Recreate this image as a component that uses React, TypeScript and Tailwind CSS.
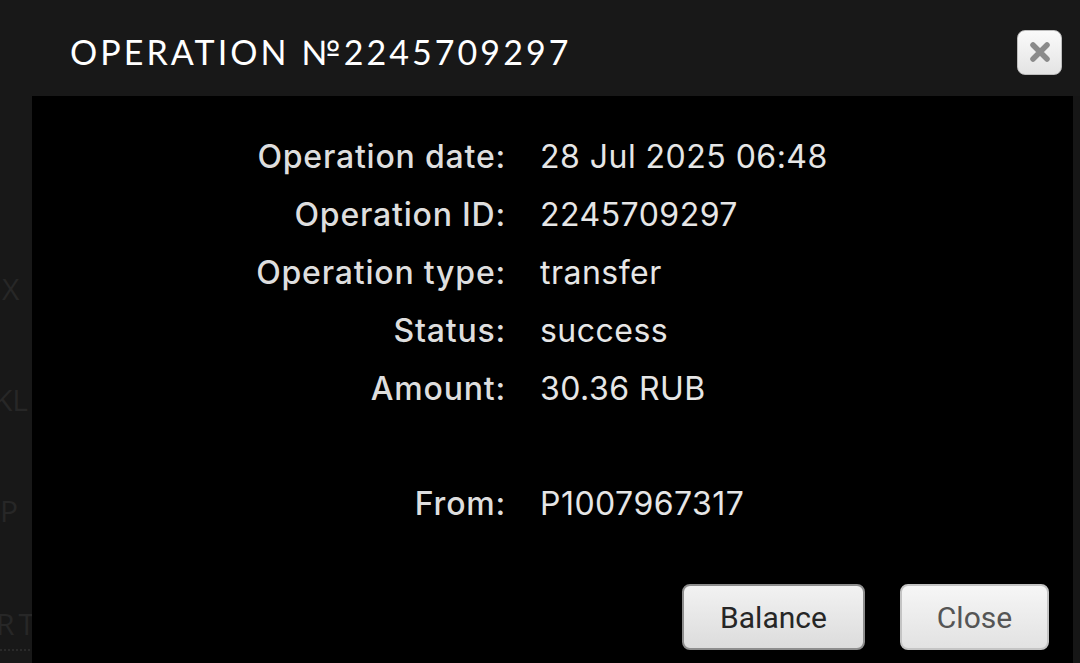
const rows: [string, string][] = [
  ['Operation date:', '28 Jul 2025 06:48'],
  ['Operation ID:', '2245709297'],
  ['Operation type:', 'transfer'],
  ['Status:', 'success'],
  ['Amount:', '30.36 RUB'],
];

function Row({ label, value }: { label: string; value: string }) {
  return (
    <div className="flex h-[58px] items-center">
      <div className="w-[474px] text-right font-medium text-[#dedede] tracking-[0.025em]">{label}</div>
      <div className="pl-[34px] text-[#e6e6e6] tracking-[0.015em]">{value}</div>
    </div>
  );
}

export default function App() {
  return (
    <div className="w-[1080px] h-[663px] bg-[#181818] flex flex-col overflow-hidden font-['Inter',sans-serif]">
      <div className="h-[96px] flex items-center justify-between pl-[70px] pr-[18px] shrink-0">
        <h1 className="text-[34px] tracking-[0.09em] text-white font-['Lato',sans-serif] leading-none pt-[8px]">
          OPERATION №2245709297
        </h1>
        <button className="w-[45px] h-[45px] rounded-[8px] border border-[#bdbdbd] bg-gradient-to-b from-[#fafafa] to-[#e4e4e4] flex items-center justify-center mt-[8px]">
          <svg width="22" height="22" viewBox="0 0 22 22">
            <path d="M4 4 L18 18 M18 4 L4 18" stroke="#8a8a8a" strokeWidth="5.5" strokeLinecap="round" />
          </svg>
        </button>
      </div>

      <div className="flex flex-1 min-h-0">
        <div className="w-[32px] shrink-0 relative overflow-hidden text-[#272727] text-[30px] font-['Open_Sans',sans-serif]">
          <div className="absolute top-[170px] left-[2px]">X</div>
          <div className="absolute top-[281px] -left-[6px]">KL</div>
          <div className="absolute top-[392px] left-[0px]">P</div>
          <div className="absolute top-[505px] -left-[4px] tracking-[4px]">RT</div>
          <div className="absolute top-[553px] left-0 w-[30px] border-t-2 border-dotted border-[#2a2a2a]" />
        </div>

        <div className="flex-1 bg-black flex flex-col pt-[32px] text-[32px]">
          {rows.map(([l, v]) => (
            <Row key={l} label={l} value={v} />
          ))}
          <div className="h-[57px]" />
          <Row label="From:" value="P1007967317" />

          <div className="mt-auto mb-[13px] flex justify-end gap-[35px] pr-[24px] font-['Roboto',sans-serif] text-[30px]">
            <button className="w-[183px] h-[66px] rounded-[8px] border-2 border-[#8d8d8d] bg-gradient-to-b from-[#f2f2f2] to-[#dcdcdc] text-[#262626]">
              Balance
            </button>
            <button className="w-[149px] h-[66px] rounded-[8px] border-2 border-[#c4c4c4] bg-gradient-to-b from-[#f6f6f6] to-[#e2e2e2] text-[#555]">
              Close
            </button>
          </div>
        </div>

        <div className="w-[7px] shrink-0 bg-[#161616]" />
      </div>
    </div>
  );
}
